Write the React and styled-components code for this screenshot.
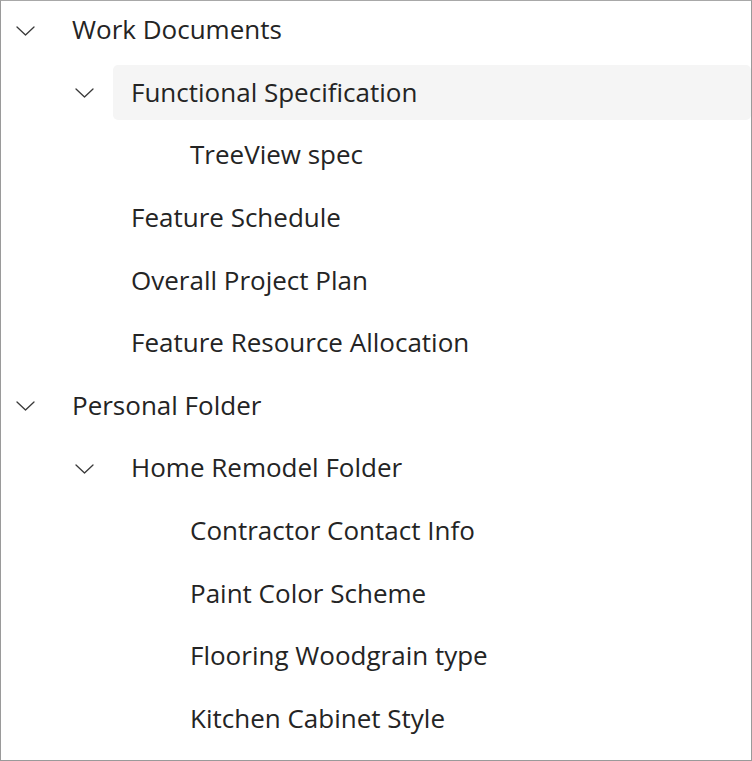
import React from 'react';
import styled, { createGlobalStyle } from 'styled-components';

const GlobalStyle = createGlobalStyle`
	html, body {
		margin: 0;
		padding: 0;
		background: #fff;
	}
	body {
		font-family: "Open Sans", "Noto Sans", "Liberation Sans", sans-serif;
		color: #242424;
	}
`;

const Frame = styled.div`
	box-sizing: border-box;
	width: 752px;
	height: 761px;
	border: 1px solid #9a9a9a;
	border-top-color: #a8a8a8;
	padding-top: 1px;
	overflow: hidden;
	background: #fff;
`;

const Tree = styled.ul`
	list-style: none;
	margin: 0;
	padding: 0;
	display: flex;
	flex-direction: column;
	gap: 7.65px;
`;

const Row = styled.li`
	display: flex;
	align-items: stretch;
	height: 55px;
	padding-left: ${p => (p.$level - 1) * 59}px;
`;

const ChevronSlot = styled.span`
	flex: 0 0 53px;
	display: flex;
	align-items: center;
	padding-left: 15px;
	padding-top: 2px;
	box-sizing: border-box;
`;

const Label = styled.span`
	flex: 1;
	display: flex;
	align-items: center;
	padding-left: 18px;
	padding-bottom: 1px;
	border-radius: 5px;
	font-size: 26px;
	background: ${p => (p.$selected ? '#f5f5f5' : 'transparent')};
`;

const Chevron = () => (
	<svg width="19" height="10" viewBox="0 0 19 10" fill="none">
		<path d="M1 1l8.5 8 8.5-8" stroke="#3a3a3a" strokeWidth="1.3" strokeLinecap="round" strokeLinejoin="round" />
	</svg>
);

const items = [
	{ level: 1, label: 'Work Documents', open: true },
	{ level: 2, label: 'Functional Specification', open: true, selected: true },
	{ level: 3, label: 'TreeView spec' },
	{ level: 2, label: 'Feature Schedule' },
	{ level: 2, label: 'Overall Project Plan' },
	{ level: 2, label: 'Feature Resource Allocation' },
	{ level: 1, label: 'Personal Folder', open: true },
	{ level: 2, label: 'Home Remodel Folder', open: true },
	{ level: 3, label: 'Contractor Contact Info' },
	{ level: 3, label: 'Paint Color Scheme' },
	{ level: 3, label: 'Flooring Woodgrain type' },
	{ level: 3, label: 'Kitchen Cabinet Style' },
];

export default function App() {
	return (
		<>
			<GlobalStyle />
			<Frame>
				<Tree>
					{items.map(item => (
						<Row key={item.label} $level={item.level}>
							<ChevronSlot>{item.open && <Chevron />}</ChevronSlot>
							<Label $selected={item.selected}>{item.label}</Label>
						</Row>
					))}
				</Tree>
			</Frame>
		</>
	);
}
